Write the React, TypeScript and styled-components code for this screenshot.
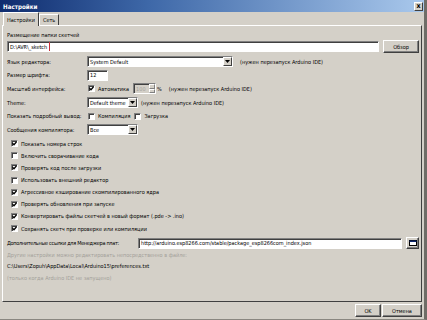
import React from 'react'
import styled, { createGlobalStyle } from 'styled-components'

const GlobalStyle = createGlobalStyle`
    html, body {
        margin: 0;
        padding: 0;
    }
    body {
        background: #d4d0c8;
        font-family: "DejaVu Sans Condensed", "Liberation Sans", Arial, sans-serif;
        font-size: 5.5px;
        color: #000;
    }
`

const Window = styled.div`
    width: 427px;
    height: 320px;
    box-sizing: border-box;
    display: flex;
    flex-direction: column;
    background: #d4d0c8;
    border-right: 3px solid #6f6d67;
    border-bottom: 1px solid #8a8780;
    overflow: hidden;
`

const TitleBar = styled.div`
    height: 12px;
    flex: none;
    display: flex;
    align-items: center;
    justify-content: space-between;
    padding: 0 1px 0 3px;
    background: linear-gradient(to right, #0f2c6e 0%, #3e68a8 35%, #a9c8ec 100%);
`

const Title = styled.span`
    color: #fff;
    font-weight: bold;
    font-size: 6.2px;
`

const CloseButton = styled.span`
    width: 9px;
    height: 9px;
    box-sizing: border-box;
    display: flex;
    align-items: center;
    justify-content: center;
    background: #d4d0c8;
    border: 1px solid;
    border-color: #fff #404040 #404040 #fff;
    font-size: 7px;
    font-weight: bold;
    line-height: 1;
`

const Body = styled.div`
    flex: 1;
    display: flex;
    flex-direction: column;
    padding: 0 0 0 2px;
`

const TabStrip = styled.div`
    height: 13px;
    flex: none;
    display: flex;
    align-items: flex-end;
    padding-left: 1px;
    position: relative;
    z-index: 1;
`

const Tab = styled.div<{ $active?: boolean }>`
    height: ${p => (p.$active ? 14 : 11)}px;
    margin-bottom: ${p => (p.$active ? -1 : 0)}px;
    box-sizing: border-box;
    display: flex;
    align-items: center;
    padding: 0 3px;
    background: #d4d0c8;
    border: 1px solid;
    border-color: #fff #404040 transparent #fff;
    border-bottom: none;
`

const Panel = styled.div`
    flex: 1;
    display: flex;
    flex-direction: column;
    margin-right: 2px;
    padding: 0 2px 0 4px;
    border: 1px solid;
    border-color: #fff #404040 #404040 #fff;
`

const TextRow = styled.div<{ $h: number; $muted?: boolean }>`
    height: ${p => p.$h}px;
    flex: none;
    display: flex;
    align-items: center;
    white-space: nowrap;
    color: ${p => (p.$muted ? '#a3a09a' : '#000')};
`

const FieldRow = styled.div<{ $h: number }>`
    height: ${p => p.$h}px;
    flex: none;
    display: flex;
    align-items: center;
    gap: 4px;
    white-space: nowrap;
`

const FormLabel = styled.span`
    width: 76px;
    flex: none;
`

const UrlLabel = styled.span`
    width: 127px;
    flex: none;
    letter-spacing: -0.3px;
`

const TextField = styled.div<{ $w?: number; $disabled?: boolean }>`
    ${p => (p.$w ? `width: ${p.$w}px; flex: none;` : 'flex: 1;')}
    height: 11px;
    box-sizing: border-box;
    display: flex;
    align-items: center;
    padding: 0 2px;
    background: ${p => (p.$disabled ? '#d4d0c8' : '#fff')};
    color: ${p => (p.$disabled ? '#a3a09a' : '#000')};
    border: 1px solid;
    border-color: #808080 #fff #fff #808080;
    box-shadow: inset 1px 1px #404040;
    overflow: hidden;
`

const Marked = styled.span`
    display: flex;
    align-items: center;
    height: 11px;
    margin: 0 0 0 -3px;
    padding: 0 2px 0 2px;
    border: 1px solid #c9313b;
    box-sizing: border-box;
`

const SelectBox = styled.div<{ $w: number }>`
    width: ${p => p.$w}px;
    flex: none;
    height: 11px;
    box-sizing: border-box;
    display: flex;
    align-items: center;
    padding-left: 2px;
    background: #fff;
    border: 1px solid;
    border-color: #808080 #fff #fff #808080;
    box-shadow: inset 1px 1px #404040;
`

const SelectText = styled.span`
    flex: 1;
`

const ArrowButton = styled.span`
    width: 9px;
    height: 9px;
    box-sizing: border-box;
    display: flex;
    align-items: center;
    justify-content: center;
    background: #d4d0c8;
    border: 1px solid;
    border-color: #fff #404040 #404040 #fff;
`

const SpinArrows = styled.span`
    width: 6px;
    height: 9px;
    display: flex;
    flex-direction: column;
    margin-left: auto;
    margin-right: -2px;
`

const SpinHalf = styled.span`
    flex: 1;
    background: #d4d0c8;
    border: 1px solid;
    border-color: #fff #808080 #808080 #fff;
`

const Hint = styled.span<{ $gap?: number }>`
    margin-left: ${p => p.$gap ?? 0}px;
`

const CheckItem = styled.label<{ $gap?: number }>`
    display: flex;
    align-items: center;
    gap: 3px;
    margin-left: ${p => p.$gap ?? 0}px;
`

const Box = styled.span`
    width: 7px;
    height: 7px;
    flex: none;
    box-sizing: border-box;
    display: flex;
    align-items: center;
    justify-content: center;
    background: #fff;
    border: 1px solid;
    border-color: #808080 #fff #fff #808080;
    box-shadow: inset 1px 1px #404040;
`

const CheckList = styled.div`
    display: flex;
    flex-direction: column;
    padding: 1px 0 0 4px;
`

const CheckRow = styled.div`
    height: 12.15px;
    display: flex;
    align-items: center;
    white-space: nowrap;
`

const IconButton = styled.span`
    width: 13px;
    height: 12px;
    flex: none;
    box-sizing: border-box;
    display: flex;
    align-items: center;
    justify-content: center;
    background: #d4d0c8;
    border: 1px solid;
    border-color: #fff #404040 #404040 #fff;
    box-shadow: inset -1px -1px #808080;
`

const PushButton = styled.button<{ $w: number }>`
    width: ${p => p.$w}px;
    height: 13px;
    flex: none;
    padding: 0;
    font: inherit;
    color: #000;
    background: #d4d0c8;
    border: 1px solid;
    border-color: #fff #404040 #404040 #fff;
    box-shadow: inset -1px -1px #808080;
`

const Footer = styled.div`
    height: 17px;
    flex: none;
    display: flex;
    justify-content: flex-end;
    align-items: center;
    gap: 1px;
    padding-right: 2px;
`

const Check: React.FC<{ on?: boolean }> = ({ on }) => (
    <Box>
        {on && (
            <svg width="5" height="5" viewBox="0 0 5 5">
                <path d="M0.5 2.2 L2 3.7 L4.6 0.8" stroke="#000" strokeWidth="1.3" fill="none"/>
            </svg>
        )}
    </Box>
)

const Arrow: React.FC = () => (
    <svg width="5" height="3" viewBox="0 0 5 3">
        <path d="M0 0 H5 L2.5 3 Z" fill="#000"/>
    </svg>
)

const Select: React.FC<{ w: number; value: string }> = ({ w, value }) => (
    <SelectBox $w={w}>
        <SelectText>{value}</SelectText>
        <ArrowButton><Arrow/></ArrowButton>
    </SelectBox>
)

const options: [string, boolean][] = [
    ['Показать номера строк', true],
    ['Включить сворачивание кода', false],
    ['Проверять код после загрузки', true],
    ['Использовать внешний редактор', false],
    ['Агрессивное кэширование скомпилированного ядра', true],
    ['Проверять обновления при запуске', true],
    ['Конвертировать файлы скетчей в новый формат (.pde -> .ino)', true],
    ['Сохранять скетч при проверке или компиляции', true],
]

const restart = '(нужен перезапуск Arduino IDE)'

const App: React.FC = () => {
    return (
        <>
            <GlobalStyle/>
            <Window>
                <TitleBar>
                    <Title>Настройки</Title>
                    <CloseButton>x</CloseButton>
                </TitleBar>
                <Body>
                    <TabStrip>
                        <Tab $active>Настройки</Tab>
                        <Tab>Сеть</Tab>
                    </TabStrip>
                    <Panel>
                        <TextRow $h={11} style={{ marginTop: 3 }}>Размещение папки скетчей</TextRow>
                        <FieldRow $h={13}>
                            <TextField><Marked>D:\AVR\_sketch</Marked></TextField>
                            <PushButton $w={36}>Обзор</PushButton>
                        </FieldRow>
                        <FieldRow $h={13.6} style={{ marginTop: 2 }}>
                            <FormLabel>Язык редактора:</FormLabel>
                            <Select w={146} value="System Default"/>
                            <Hint $gap={3}>{restart}</Hint>
                        </FieldRow>
                        <FieldRow $h={13.6}>
                            <FormLabel>Размер шрифта:</FormLabel>
                            <TextField $w={21}>12</TextField>
                        </FieldRow>
                        <FieldRow $h={13.6}>
                            <FormLabel>Масштаб интерфейса:</FormLabel>
                            <CheckItem $gap={1}><Check on/>Автоматика</CheckItem>
                            <TextField $w={23} $disabled>
                                100
                                <SpinArrows><SpinHalf/><SpinHalf/></SpinArrows>
                            </TextField>
                            <Hint $gap={-3}>%</Hint>
                            <Hint $gap={3}>{restart}</Hint>
                        </FieldRow>
                        <FieldRow $h={13.6}>
                            <FormLabel>Theme:</FormLabel>
                            <Select w={51} value="Default theme"/>
                            <Hint $gap={-1}>{restart}</Hint>
                        </FieldRow>
                        <FieldRow $h={13.6}>
                            <FormLabel>Показать подробный вывод:</FormLabel>
                            <CheckItem $gap={1}><Check/>Компиляция</CheckItem>
                            <CheckItem><Check/>Загрузка</CheckItem>
                        </FieldRow>
                        <FieldRow $h={13.6}>
                            <FormLabel>Сообщения компилятора:</FormLabel>
                            <Select w={51} value="Все"/>
                        </FieldRow>
                        <CheckList>
                            {options.map(([text, on]) => (
                                <CheckRow key={text}>
                                    <CheckItem><Check on={on}/>{text}</CheckItem>
                                </CheckRow>
                            ))}
                        </CheckList>
                        <FieldRow $h={13} style={{ marginTop: 2 }}>
                            <UrlLabel>Дополнительные ссылки для Менеджера плат:</UrlLabel>
                            <TextField>http://arduino.esp8266.com/stable/package_esp8266com_index.json</TextField>
                            <IconButton>
                                <svg width="8" height="6" viewBox="0 0 8 6">
                                    <rect x="0.5" y="0.5" width="7" height="5" fill="#fff" stroke="#000"/>
                                    <rect x="0.5" y="0.5" width="7" height="1.5" fill="#0a246a"/>
                                </svg>
                            </IconButton>
                        </FieldRow>
                        <TextRow $h={11} $muted>Другие настройки можно редактировать непосредственно в файле:</TextRow>
                        <TextRow $h={11.5}>C:\Users\Zopuh\AppData\Local\Arduino15\preferences.txt</TextRow>
                        <TextRow $h={11} $muted>(только когда Arduino IDE не запущено)</TextRow>
                    </Panel>
                    <Footer>
                        <PushButton $w={26}>OK</PushButton>
                        <PushButton $w={40}>Отмена</PushButton>
                    </Footer>
                </Body>
            </Window>
        </>
    )
}

export default App
